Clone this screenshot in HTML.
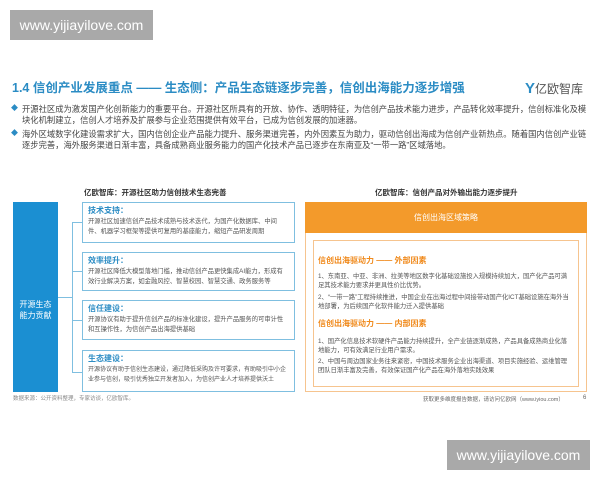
<!DOCTYPE html>
<html><head><meta charset="utf-8"><style>
*{margin:0;padding:0;box-sizing:border-box}
body{width:600px;height:480px;background:#fff;position:relative;overflow:hidden;font-family:"Liberation Sans","Noto Sans CJK SC",sans-serif;color:#444}
.a{position:absolute}
.wm{background:#a9a9a9;color:#fff;font-size:14px;line-height:30px;text-align:center;width:143px;height:30px}
.t{font-size:12.5px;font-weight:bold;color:#2b8cc4;left:12px;top:77px;white-space:nowrap}
.b{font-size:8.3px;line-height:10.5px;color:#444;left:22px;width:567px}
.b:before{content:"◆";position:absolute;left:-11px;color:#2b8cc4;font-size:7px}
.ct{font-size:7.5px;font-weight:bold;color:#333;white-space:nowrap}
.card{position:absolute;left:82px;width:213px;border:1px solid #7fbfe0;padding:1px 5px;font-size:6.3px;line-height:10px;color:#555}
.card b{display:block;color:#2b8cc4;font-size:8px;line-height:13px}
.r{font-size:6.3px;line-height:9px;color:#555;position:absolute;left:4px;right:5px}
.o{color:#f08a1c;font-size:8px;font-weight:bold;position:absolute;left:4px}
</style></head><body>
<div class="a wm" style="left:10px;top:10px">www.yijiayilove.com</div>
<div class="a wm" style="left:447px;top:440px">www.yijiayilove.com</div>
<div class="a t">1.4 信创产业发展重点 —— 生态侧：产品生态链逐步完善，信创出海能力逐步增强</div>
<div class="a" style="left:525px;top:80px;font-size:12px;color:#555;white-space:nowrap"><span style="color:#2b8cc4;font-weight:bold;font-size:15px">Y</span>亿欧智库</div>
<div class="a b" style="top:104px">开源社区成为激发国产化创新能力的重要平台。开源社区所具有的开放、协作、透明特征，为信创产品技术能力进步，产品转化效率提升，信创标准化及模块化机制建立，信创人才培养及扩展参与企业范围提供有效平台，已成为信创发展的加速器。</div>
<div class="a b" style="top:129px">海外区域数字化建设需求扩大，国内信创企业产品能力提升、服务渠道完善，内外因素互为助力，驱动信创出海成为信创产业新热点。随着国内信创产业链逐步完善，海外服务渠道日渐丰富，具备成熟商业服务能力的国产化技术产品已逐步在东南亚及“一带一路”区域落地。</div>
<div class="a ct" style="left:84px;top:187px">亿欧智库：开源社区助力信创技术生态完善</div>
<div class="a" style="left:13px;top:202px;width:45px;height:190px;background:#1b8fd2;color:#fff;font-size:8px;line-height:11px;text-align:center;padding-top:97px">开源生态<br>能力贡献</div>
<div class="a" style="left:58px;top:297px;width:14px;border-top:1px solid #7fbfe0"></div>
<div class="a" style="left:72px;top:222px;height:150px;border-left:1px solid #7fbfe0"></div>
<div class="a" style="left:72px;top:222px;width:10px;border-top:1px solid #7fbfe0"></div>
<div class="a" style="left:72px;top:271px;width:10px;border-top:1px solid #7fbfe0"></div>
<div class="a" style="left:72px;top:320px;width:10px;border-top:1px solid #7fbfe0"></div>
<div class="a" style="left:72px;top:372px;width:10px;border-top:1px solid #7fbfe0"></div>
<div class="card" style="top:202px;height:41px"><b>技术支持：</b>开源社区加速信创产品技术成熟与技术迭代，为国产化数据库、中间件、机器学习框架等提供可复用的基座能力，缩短产品研发周期</div>
<div class="card" style="top:252px;height:39px"><b>效率提升：</b>开源社区降低大模型落地门槛，推动信创产品更快集成AI能力，形成有效行业解决方案，如金融风控、智慧校园、智慧交通、政务服务等</div>
<div class="card" style="top:300px;height:40px"><b>信任建设：</b>开源协议有助于提升信创产品的标准化建设，提升产品服务的可审计性和互操作性，为信创产品出海提供基础</div>
<div class="card" style="top:350px;height:42px;font-size:6px"><b>生态建设：</b>开源协议有助于信创生态建设，通过降低采购及许可要求，有助吸引中小企业参与信创，吸引优秀独立开发者加入，为信创产业人才培养提供沃土</div>
<div class="a" style="left:13px;top:394px;font-size:5.5px;color:#888">数据来源：公开资料整理，专家访谈，亿欧智库。</div>
<div class="a ct" style="left:375px;top:187px">亿欧智库：信创产品对外输出能力逐步提升</div>
<div class="a" style="left:305px;top:202px;width:282px;height:190px;border:1px solid #f6c48f"></div>
<div class="a" style="left:305px;top:202px;width:282px;height:31px;background:#f39a2b;color:#fff;font-size:8px;line-height:31px;text-align:center">信创出海区域策略</div>
<div class="a" style="left:313px;top:240px;width:266px;height:147px;border:1px solid #f6c48f">
<div class="o" style="top:14px">信创出海驱动力 —— 外部因素</div>
<div class="r" style="top:31px">1、东南亚、中亚、非洲、拉美等地区数字化基础设施投入规模持续加大，国产化产品可满足其技术能力要求并更具性价比优势。</div>
<div class="r" style="top:52px">2、“一带一路”工程持续推进，中国企业在出海过程中间接带动国产化ICT基础设施在海外当地部署，为后续国产化软件能力迁入提供基础</div>
<div class="o" style="top:77px">信创出海驱动力 —— 内部因素</div>
<div class="r" style="top:96px">1、国产化信息技术软硬件产品能力持续提升，全产业链逐渐成熟，产品具备成熟商业化落地能力，可有效满足行业用户需求。</div>
<div class="r" style="top:116px">2、中国与周边国家业务往来紧密，中国技术服务企业出海渠道、项目实施经验、运维管理团队日渐丰富及完善，有效保证国产化产品在海外落地实践效果</div>
</div>
<div class="a" style="left:423px;top:395px;font-size:5.5px;color:#666;white-space:nowrap">获取更多维度报告数据，请访问亿欧网（www.iyiou.com）</div>
<div class="a" style="left:583px;top:395px;font-size:6px;color:#666">6</div>
</body></html>
